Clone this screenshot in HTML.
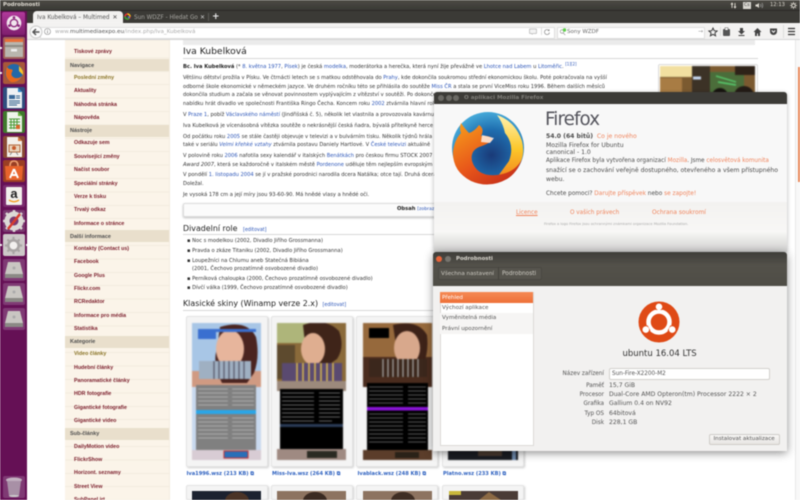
<!DOCTYPE html>
<html><head><meta charset="utf-8"><style>
html,body{margin:0;padding:0;background:#fff;width:800px;height:500px;overflow:hidden}
#r{position:relative;width:800px;height:500px;overflow:hidden;background:#fff;filter:blur(.4px);font-family:"DejaVu Sans",sans-serif}
#r div,#r span.a,#r svg{position:absolute}
.t{white-space:nowrap;line-height:10px;height:10px}
.p{left:183px;font-size:5.15px;color:#333}
.p a,.l{color:#2b55b8}
.s{left:74px;font-family:"Liberation Sans",sans-serif;font-size:5.3px;font-weight:bold;color:#7a1c2a;white-space:nowrap;line-height:10px}
.h{left:65px;width:104px;height:12px;background:#e9dfcc}
.ht{left:70px;font-family:"Liberation Sans",sans-serif;font-size:5.5px;font-weight:bold;color:#4f4f4f;white-space:nowrap;line-height:10px}
.lab{right:196px;font-size:5.7px;color:#555;white-space:nowrap;line-height:10px;text-align:right}
.val{left:609px;font-size:6.1px;color:#555;white-space:nowrap;line-height:10px}
.u{font-size:6.1px;color:#4c4c4c;white-space:nowrap;line-height:10px}
.o{color:#f0845c}
.box{background:#f4f4f4;border:1px solid #e4e4e4;border-radius:2px;box-shadow:1px 1px 2px #ccc;width:80px;height:149px}
.cap{font-size:5.1px;font-weight:bold;color:#2f62c0;white-space:nowrap;line-height:10px;top:469px}
.sk{filter:blur(.5px)}
</style></head><body><div id="r">

<!-- page -->
<div style="left:65px;top:40px;width:104px;height:460px;background:#fbf4e9;border-right:1px solid #f3ecdf"></div>
<div style="left:65px;top:40px;width:104px;height:460px;background:repeating-linear-gradient(180deg,#fbf4e9 0,#fbf4e9 12.4px,#f3ecdf 12.4px,#f3ecdf 13.4px);background-position:0 5px"></div>
<div class="h" style="top:59px"></div><div class="h" style="top:124.5px"></div><div class="h" style="top:230px"></div><div class="h" style="top:336px"></div><div class="h" style="top:427.5px"></div>
<div class="s" style="top:47px">Tiskové zprávy</div>
<div class="ht" style="top:60.5px">Navigace</div>
<div class="s" style="top:72.5px;color:#8a7426">Poslední změny</div>
<div class="s" style="top:86px">Aktuality</div>
<div class="s" style="top:99.5px">Náhodná stránka</div>
<div class="s" style="top:113px">Nápověda</div>
<div class="ht" style="top:126px">Nástroje</div>
<div class="s" style="top:138px">Odkazuje sem</div>
<div class="s" style="top:151.5px">Související změny</div>
<div class="s" style="top:165px">Načíst soubor</div>
<div class="s" style="top:178.5px">Speciální stránky</div>
<div class="s" style="top:191.5px">Verze k tisku</div>
<div class="s" style="top:205px">Trvalý odkaz</div>
<div class="s" style="top:218.5px">Informace o stránce</div>
<div class="ht" style="top:231.5px">Další informace</div>
<div class="s" style="top:244px">Kontakty (Contact us)</div>
<div class="s" style="top:257px">Facebook</div>
<div class="s" style="top:270.5px">Google Plus</div>
<div class="s" style="top:284px">Flickr.com</div>
<div class="s" style="top:297px">RCRedaktor</div>
<div class="s" style="top:310.5px">Informace pro média</div>
<div class="s" style="top:324px">Statistika</div>
<div class="ht" style="top:337px">Kategorie</div>
<div class="s" style="top:349px;color:#8a7426">Video články</div>
<div class="s" style="top:362.5px">Hudební články</div>
<div class="s" style="top:376px">Panoramatické články</div>
<div class="s" style="top:389px">HDR fotografie</div>
<div class="s" style="top:402.5px">Gigantické fotografie</div>
<div class="s" style="top:416px">Gigantické video</div>
<div class="ht" style="top:429px">Sub-články</div>
<div class="s" style="top:441.5px">DailyMotion video</div>
<div class="s" style="top:454.5px">FlickrShow</div>
<div class="s" style="top:468px">Horizont. seznamy</div>
<div class="s" style="top:481.5px">Street View</div>
<div class="s" style="top:494.5px;height:5.5px;overflow:hidden">SubPanel.jrt</div>

<div style="left:183px;top:40px;width:572px;height:5px;background:#ebebeb"></div>
<div class="t" style="left:183px;top:47px;font-size:9.2px;color:#222;line-height:10px">Iva Kubelková</div>
<div style="left:183px;top:58px;width:575px;height:1px;background:#d8d8d8"></div>

<div class="t p" style="top:62px"><b style="color:#222">Bc. Iva Kubelková</b> (* <a>8. května 1977</a>, <a>Písek</a>) je česká <a>modelka</a>, moderátorka a herečka, která nyní žije převážně ve <a>Lhotce nad Labem</a> u <a>Litoměřic</a>. <sup style="font-size:4px;color:#2b55b8;line-height:0">[1][2]</sup></div>
<div class="t p" style="top:73px">Většinu dětství prožila v Písku. Ve čtrnácti letech se s matkou odstěhovala do <a>Prahy</a>, kde dokončila soukromou střední ekonomickou školu. Poté pokračovala na vyšší</div>
<div class="t p" style="top:81.5px">odborné škole ekonomické v německém jazyce. Ve druhém ročníku této se přihlásila do soutěže <a>Miss ČR</a> a stala se první ViceMiss roku 1996. Během dalších měsíců</div>
<div class="t p" style="top:90px">dokončila studium a začala se věnovat povinnostem vyplývajícím z vítězství v soutěži. Po dokončení</div>
<div class="t p" style="top:98.5px">nabídku hrát divadlo ve společnosti Františka Ringo Čecha. Koncem roku <a>2002</a> ztvárnila hlavní roli</div>
<div class="t p" style="top:109.5px">V <a>Praze 1</a>, pobíž <a>Václavského náměstí</a> (Jindřišská č. 5), několik let vlastnila a provozovala kavárnu</div>
<div class="t p" style="top:120.5px">Iva Kubelková je vícenásobná vítězka soutěže o nekrásnější česká ňadra, bývalá přítelkyně herce</div>
<div class="t p" style="top:131.5px">Od počátku roku <a>2005</a> se stále častěji objevuje v televizi a v bulvárním tisku. Několik týdnů hrála</div>
<div class="t p" style="top:140px">také v seriálu <a><i>Velmi křehké vztahy</i></a> ztvárnila postavu Daniely Hartlové. V <a>České televizi</a> aktuálně</div>
<div class="t p" style="top:151px">V polovině roku <a>2006</a> nafotila sexy kalendář v italských <a>Benátkách</a> pro českou firmu STOCK 2007</div>
<div class="t p" style="top:160px"><i>Award 2007</i>, která se každoročně v italském městě <a>Pordenone</a> uděluje těm nejlepším evropským</div>
<div class="t p" style="top:170px">V pondělí <a>1. listopadu 2004</a> se jí v pražské porodnici narodila dcera Natálka; otce tají. Druhá dcera</div>
<div class="t p" style="top:179px">Doležal.</div>
<div class="t p" style="top:190px">Je vysoká 178 cm a její míry jsou 93-60-90. Má hnědé vlasy a hnědé oči.</div>

<div style="left:183px;top:203px;width:572px;height:12px;background:#fbfbfb;border:1px solid #ddd;border-radius:2px;box-shadow:0 1px 2px #bbb"></div>
<div class="t" style="left:397px;top:204px;font-size:5.2px;font-weight:bold;color:#222">Obsah <span style="font-weight:normal;color:#2b55b8;font-size:4.6px">[zobrazit]</span></div>

<div class="t" style="left:183px;top:224px;font-size:7.9px;color:#222">Divadelní role <span class="l" style="font-size:4.8px;margin-left:3px">[editovat]</span></div>
<div style="left:183px;top:234px;width:575px;height:1px;background:#d8d8d8"></div>
<div class="t p" style="left:187px;top:236px">▪ Noc s modelkou (2002, Divadlo Jiřího Grossmanna)</div>
<div class="t p" style="left:187px;top:246px">▪ Pravda o zkáze Titaniku (2002, Divadlo Jiřího Grossmanna)</div>
<div class="t p" style="left:187px;top:255.5px">▪ Loupežníci na Chlumu aneb Statečná Bibiána</div>
<div class="t p" style="left:192px;top:264px">(2001, Čechovo prozatímně osvobozené divadlo)</div>
<div class="t p" style="left:187px;top:274px">▪ Perníková chaloupka (2000, Čechovo prozatímně osvobozené divadlo)</div>
<div class="t p" style="left:187px;top:283px">▪ Dívčí válka (1999, Čechovo prozatímně osvobozené divadlo)</div>
<div class="t" style="left:183px;top:299px;font-size:7.9px;color:#222">Klasické skiny (Winamp verze 2.x) <span class="l" style="font-size:4.8px;margin-left:2px">[editovat]</span></div>
<div style="left:183px;top:310px;width:575px;height:1px;background:#d8d8d8"></div>

<div class="box" style="left:186px;top:316px"></div><div class="box" style="left:271px;top:316px"></div><div class="box" style="left:356px;top:316px"></div><div class="box" style="left:442px;top:316px"></div>
<div class="box" style="left:186px;top:485px;height:13px"></div><div class="box" style="left:271px;top:485px;height:13px"></div><div class="box" style="left:356px;top:485px;height:13px"></div><div class="box" style="left:442px;top:485px;height:13px"></div>

<!-- skin 1 -->
<svg class="sk" style="left:192px;top:323px" width="69" height="137" viewBox="0 0 69 137">
<rect width="69" height="137" fill="#c9d9ee"/><rect width="69" height="62" fill="#a8c6e6"/><rect y="48" width="69" height="16" fill="#d09a82"/>
<path d="M28 4Q55-4 64 14Q68 34 62 50L55 60H30Q20 40 25 26Z" fill="#4a2420"/>
<ellipse cx="38" cy="26" rx="14" ry="19" fill="#e7b59c"/><rect x="8" y="6" width="56" height="3" fill="#3a6fd0"/><rect x="6" y="6" width="18" height="10" fill="#3a6fd0"/>
<rect x="7" y="38" width="52" height="18" fill="#9fb0c2"/><path d="M22 38v18M27 38v18M32 38v18M37 38v18M42 38v18M47 38v18M52 38v18" stroke="#556" stroke-width="1.2"/>
<rect x="4" y="62" width="60" height="65" fill="#808080"/><rect x="4" y="87" width="60" height="4" fill="#2aa6e8"/>
<path d="M6 66h56M6 70h56M6 74h56M6 78h56M6 82h56M6 95h56M6 99h56M6 103h56M6 107h56M6 111h56M6 115h56" stroke="#bbb" stroke-width=".8" stroke-dasharray="30 4"/>
<rect x="0" y="127" width="69" height="10" fill="#d8ccd4"/><rect x="32" y="128" width="24" height="7" fill="#2a6fb8" stroke="#c02c2c"/>
</svg>
<!-- skin 2 -->
<svg class="sk" style="left:277px;top:323px" width="69" height="137" viewBox="0 0 69 137">
<rect width="69" height="66" fill="#8a6a3a"/><rect x="0" y="0" width="32" height="20" fill="#aeb57a"/><rect x="0" y="22" width="18" height="34" fill="#5d4a2e"/>
<path d="M26 2Q48-6 62 8Q68 24 60 36L40 50L30 38Z" fill="#3f2419"/><ellipse cx="36" cy="26" rx="12" ry="16" fill="#dfae90"/>
<rect x="5" y="40" width="60" height="18" fill="#5a4a70"/><path d="M20 40v18M26 40v18M32 40v18M38 40v18M44 40v18M50 40v18M56 40v18" stroke="#e4c34c" stroke-width="1.4"/>
<rect x="0" y="58" width="69" height="10" fill="#9c8a7c"/><rect x="3" y="66" width="63" height="60" fill="#000"/>
<path d="M5 70h58M5 74h58M5 78h58M5 82h58M5 86h58M5 90h58M5 94h58M5 98h50" stroke="#888" stroke-width=".8" stroke-dasharray="32 5"/><rect x="3" y="101" width="63" height="3" fill="#293a55"/>
<rect x="0" y="126" width="69" height="11" fill="#9f8a82"/><rect x="30" y="128" width="30" height="7" fill="#2a2a22"/>
</svg>
<!-- skin 3 -->
<svg class="sk" style="left:363px;top:323px" width="69" height="137" viewBox="0 0 69 137">
<rect width="69" height="62" fill="#96693c"/><rect y="34" width="69" height="30" fill="#4a2c1e"/>
<path d="M30 2Q55-4 64 12Q66 30 60 42L36 42Z" fill="#3d2218"/><ellipse cx="44" cy="25" rx="13" ry="17" fill="#d8a88c"/>
<rect x="6" y="5" width="20" height="10" fill="#000"/>
<rect x="6" y="36" width="58" height="18" fill="#3b271c"/><path d="M20 36v18M25 36v18M30 36v18M35 36v18M40 36v18M45 36v18M50 36v18M55 36v18" stroke="#aaa" stroke-width="1.2"/>
<rect x="4" y="60" width="61" height="67" fill="#000"/><rect x="4" y="84" width="61" height="3.5" fill="#8a14d8"/>
<path d="M6 64h57M6 68h57M6 72h57M6 76h57M6 80h57M6 91h57M6 95h57M6 99h57M6 103h57M6 107h57M6 111h57M6 115h57M6 119h57" stroke="#777" stroke-width=".8" stroke-dasharray="34 5"/>
<rect y="127" width="69" height="10" fill="#5b3d2a"/><rect x="32" y="129" width="24" height="6" fill="#2a2218"/>
</svg>
<!-- skin 4 -->
<svg class="sk" style="left:448px;top:440px" width="70" height="20" viewBox="0 0 70 20"><rect width="70" height="20" fill="#1a1c22"/><rect x="30" y="10" width="24" height="6" fill="#4a3a30"/><rect x="64" y="2" width="4" height="18" fill="#6d88aa"/></svg>
<!-- second row -->
<svg style="left:192px;top:491px" width="69" height="9"><rect width="69" height="9" fill="#1c2230"/><ellipse cx="45" cy="10" rx="12" ry="9" fill="#4a3326"/></svg>
<svg style="left:277px;top:491px" width="69" height="9"><rect width="69" height="9" fill="#8d7360"/><ellipse cx="38" cy="10" rx="12" ry="9" fill="#3a2a22"/></svg>
<svg style="left:363px;top:491px" width="69" height="9"><rect width="69" height="9" fill="#8d7360"/><ellipse cx="40" cy="10" rx="12" ry="9" fill="#3f2e24"/></svg>
<svg style="left:449px;top:491px" width="69" height="9"><rect width="69" height="9" fill="#4a3c36"/><rect width="12" height="4" fill="#c8b83a"/><path d="M30 9L40 1L52 9Z" fill="#8c6a44"/></svg>
<div class="cap" style="left:186.5px">Iva1996.wsz (213 KB) ⧉</div>
<div class="cap" style="left:272px">Miss-Iva.wsz (264 KB) ⧉</div>
<div class="cap" style="left:357.5px">Ivablack.wsz (248 KB) ⧉</div>
<div class="cap" style="left:443px">Platno.wsz (233 KB) ⧉</div>

<!-- infobox photo -->
<div style="left:658px;top:64px;width:98px;height:30px;background:#fff;border:1px solid #ddd;border-radius:2px"></div>
<svg class="sk" style="left:660px;top:66px" width="95" height="28" viewBox="0 0 95 28">
<rect width="95" height="28" fill="#7b5a30"/><rect width="32" height="11" fill="#f2dfa0"/><rect x="0" y="12" width="22" height="16" fill="#a87c44"/>
<rect x="32" y="0" width="18" height="28" fill="#3c3226"/><rect x="50" y="6" width="34" height="22" fill="#4b6d3a"/><rect x="75" y="0" width="20" height="9" fill="#2e2218"/>
<path d="M56 10l20 6M58 16l18 3" stroke="#58d070" stroke-width="1.4"/><path d="M33 12h8" stroke="#c8d8f0" stroke-width="3"/>
<circle cx="60" cy="30" r="8" fill="#181410"/><circle cx="84" cy="30" r="10" fill="#241c16"/>
</svg>
<svg style="left:660px;top:249px" width="95" height="4"><rect width="95" height="4" fill="#57503a"/></svg>

<!-- scrollbar -->
<div style="left:795px;top:40px;width:5px;height:460px;background:#f8f8f8;border-left:1px solid #e8e8e8;box-sizing:border-box"></div>
<div style="left:798px;top:67px;width:2px;height:115px;background:#e98a5c"></div>

<!-- firefox chrome -->
<div style="left:27px;top:10px;width:773px;height:13px;background:#3b3a36"></div>
<div style="left:33px;top:11px;width:90px;height:12px;background:linear-gradient(#f0efed,#f4f3f2);border-radius:4px 4px 0 0"></div>
<div class="t" style="left:37px;top:13px;font-size:5.7px;color:#555;width:72px;overflow:hidden">Iva Kubelková – Multimedia</div>
<div class="t" style="left:112.5px;top:12.5px;font-size:6px;color:#444">✕</div>
<svg style="left:124px;top:13px" width="7" height="7" viewBox="0 0 14 14"><circle cx="7" cy="7" r="5" fill="none" stroke="#e33" stroke-width="3"/><path d="M7 2A5 5 0 0 1 12 7" fill="none" stroke="#f4c20d" stroke-width="3"/><path d="M2 7A5 5 0 0 0 10 11" fill="none" stroke="#3a3" stroke-width="3"/><path d="M7 7h5A5 5 0 0 1 10 11" fill="#4285f4"/></svg>
<div class="t" style="left:134px;top:13px;font-size:5.7px;color:#a8a7a2;width:64px;overflow:hidden">Sun WDZF - Hledat Google</div>
<div class="t" style="left:200px;top:12.5px;font-size:6px;color:#ccc">✕</div>
<div style="left:208px;top:13px;width:1px;height:8px;background:#5c5b56"></div>
<div class="t" style="left:212px;top:12px;font-size:9px;font-weight:bold;color:#eee">+</div>

<div style="left:27px;top:23px;width:773px;height:17px;background:#f3f2f1;border-bottom:1px solid #d5d5d5;box-sizing:border-box"></div>
<div style="left:40px;top:26.5px;width:513px;height:10px;background:#fff;border:1px solid #dedede;border-radius:1px"></div>
<svg style="left:29px;top:25px" width="14" height="14" viewBox="0 0 14 14"><circle cx="7" cy="7" r="6" fill="#fbfbfb" stroke="#c9c9c9"/><path d="M10.5 7H4.5M7 4L4 7l3 3" fill="none" stroke="#555" stroke-width="1.5"/></svg>
<svg style="left:44px;top:28px" width="7" height="7" viewBox="0 0 14 14"><circle cx="7" cy="7" r="6" fill="none" stroke="#888" stroke-width="1.2"/><path d="M7 6v4.500M7 3.500v1.500" stroke="#777" stroke-width="1.4"/></svg>
<div class="t" style="left:55px;top:27px;font-size:5.6px;color:#aaa">www.<span style="color:#555">multimediaexpo.eu</span>/index.php/Iva_Kubelková</div>
<svg style="left:529px;top:28px" width="8" height="7" viewBox="0 0 16 14"><path d="M1 2h14v9H8l-2 2v-2H1z" fill="#f3f3f3" stroke="#999"/></svg>
<div style="left:541px;top:28px;width:1px;height:7px;background:#ddd"></div>
<svg style="left:544px;top:29px" width="6" height="6" viewBox="0 0 12 12"><path d="M10 3A5 5 0 1 0 11 7" fill="none" stroke="#888" stroke-width="1.4"/><path d="M11 0v4H7z" fill="#888"/></svg>
<div style="left:557px;top:26.5px;width:146px;height:10px;background:#fff;border:1px solid #dedede;border-radius:1px"></div>
<svg style="left:558.5px;top:27.5px" width="8" height="8" viewBox="0 0 16 16"><circle cx="6" cy="7" r="3.500" fill="none" stroke="#999" stroke-width="1.4"/><path d="M8.500 10l4 4" stroke="#999" stroke-width="1.4"/><circle cx="11" cy="4" r="3.400" fill="#5fd04a"/></svg>
<div class="t" style="left:567px;top:27px;font-size:5.5px;color:#666">Sony WZDF</div>
<div class="t" style="left:698px;top:27px;font-size:6px;color:#999">→</div>
<svg style="left:708px;top:27px" width="10" height="10" viewBox="0 0 20 20"><path d="M10 2l2.400 5.400 5.800.6-4.400 3.800 1.400 5.800L10 14.600 4.800 17.600l1.400-5.800L1.800 8l5.800-.6z" fill="none" stroke="#333" stroke-width="1.8"/></svg>
<div style="left:720px;top:27px;width:1px;height:9px;background:#ddd"></div>
<svg style="left:722px;top:27px" width="9" height="10" viewBox="0 0 18 20"><rect x="2" y="4" width="14" height="14" rx="2" fill="#555"/><rect x="6" y="1.500" width="6" height="5" fill="#fff" stroke="#555"/></svg>
<svg style="left:737px;top:27px" width="9" height="10" viewBox="0 0 18 20"><path d="M6 2h6v6h4l-7 7-7-7h4z" fill="#444"/><rect x="3" y="16" width="12" height="2" fill="#444"/></svg>
<svg style="left:753px;top:27px" width="9" height="10" viewBox="0 0 18 20"><path d="M9 2L1 10h3v8h4v-5h2v5h4v-8h3z" fill="#444"/></svg>
<svg style="left:769px;top:27px" width="9" height="10" viewBox="0 0 18 20"><path d="M2 3h14v6a7 7 0 0 1-14 0z" fill="#444"/><path d="M5.500 7l3.500 3.500L12.500 7" fill="none" stroke="#fff" stroke-width="2"/></svg>
<div style="left:783px;top:24.500px;width:1px;height:13px;background:#ddd"></div>
<svg style="left:787px;top:27px" width="9" height="9" viewBox="0 0 18 18"><path d="M2 3h14M2 9h14M2 15h14" stroke="#333" stroke-width="2.500"/></svg>

<!-- top panel -->
<div style="left:0;top:0;width:800px;height:10px;background:linear-gradient(#4d4b45,#3a3935)"></div>
<div style="left:0;top:10px;width:800px;height:1px;background:#2b2a27"></div>
<div class="t" style="left:3px;top:0;font-size:5.4px;color:#dfdbd2;font-weight:bold">Podrobnosti</div>
<svg style="left:730px;top:2px" width="7" height="7" viewBox="0 0 14 14"><path d="M4 12V3M2 5l2-3 2 3M10 2v9M8 9l2 3 2-3" fill="none" stroke="#dfdbd2" stroke-width="1.800"/></svg>
<div style="left:743px;top:2px;width:8px;height:7px;background:#d8d6d0"></div>
<div class="t" style="left:744px;top:0.500px;font-size:4.600px;color:#444">Cs</div>
<svg style="left:755px;top:2px" width="9" height="7" viewBox="0 0 18 14"><path d="M1 5h3l4-3v10l-4-3H1z" fill="#dfdbd2"/><path d="M11 4q2 3 0 6M14 2q3 5 0 10" fill="none" stroke="#aaa" stroke-width="1.300"/></svg>
<div class="t" style="left:770px;top:0px;font-size:5.200px;color:#dfdbd2">12:13</div>
<svg style="left:790px;top:1.500px" width="7" height="7" viewBox="0 0 14 14"><circle cx="7" cy="7" r="3.500" fill="none" stroke="#dfdbd2" stroke-width="1.800"/><path d="M7 0v3M7 11v3M0 7h3M11 7h3M2 2l2 2M10 10l2 2M12 2l-2 2M4 10l-2 2" stroke="#dfdbd2" stroke-width="1.500"/></svg>

<!-- launcher -->
<div style="left:0;top:11px;width:27px;height:489px;background:#651055"></div>
<div style="left:2px;top:12px;width:23px;height:23px;background:linear-gradient(#b1399c,#7e1f6e);border-radius:2px"></div>
<svg style="left:6px;top:15px" width="16" height="16" viewBox="0 0 24 24"><circle cx="12" cy="12" r="11" fill="#f2e6ee"/><circle cx="12" cy="12" r="5.500" fill="none" stroke="#8d2a7c" stroke-width="2"/><circle cx="12" cy="3.800" r="2" fill="#8d2a7c"/><circle cx="5" cy="16" r="2" fill="#8d2a7c"/><circle cx="19" cy="16" r="2" fill="#8d2a7c"/></svg>

<svg style="left:2.500px;top:37px" width="22" height="22" viewBox="0 0 22 22"><rect width="22" height="22" rx="2" fill="#a1625a"/><rect x="2" y="2" width="18" height="5" fill="#e86f3a"/><rect x="2" y="5" width="18" height="15" fill="#b9b6ae"/><rect x="2" y="8" width="18" height="2" fill="#8c8a84"/><rect x="8" y="12" width="6" height="2.500" fill="#eee"/></svg>
<svg style="left:2.500px;top:62px" width="22" height="22" viewBox="0 0 22 22"><rect width="22" height="22" rx="2" fill="#a8583a"/><circle cx="11" cy="11" r="9" fill="#2368a8"/><path d="M4 5Q0 15 8 20Q17 21 20 12Q18 17 12 16Q7 14 9 10Q11 7 6 7Z" fill="#e8681c"/><path d="M16 4Q21 8 20 13L16 9Z" fill="#fbc22a"/></svg>
<svg style="left:2.500px;top:86.500px" width="22" height="22" viewBox="0 0 22 22"><rect width="22" height="22" rx="2" fill="#2f4f7f"/><path d="M4 1h11l4 4v16H4z" fill="#eef1f4"/><path d="M15 1l4 4h-4z" fill="#2c86c8"/><rect x="6" y="8" width="6" height="4" fill="#3a6a9a"/><path d="M6 14h11M6 16h11M6 18h8M13 9h4M13 11h4" stroke="#2f5e8a" stroke-width="1"/></svg>
<svg style="left:2.500px;top:111px" width="22" height="22" viewBox="0 0 22 22"><rect width="22" height="22" rx="2" fill="#3f7a2c"/><path d="M4 1h11l4 4v16H4z" fill="#eef4ea"/><path d="M15 1l4 4h-4z" fill="#68b43a"/><path d="M6 8h11M6 11h11M6 14h11M6 17h11M8 8v10M11 8v10M14 8v10" stroke="#4a9a36" stroke-width="1"/><rect x="13" y="14" width="4" height="4" fill="#d8682c"/></svg>
<svg style="left:2.500px;top:135.500px" width="22" height="22" viewBox="0 0 22 22"><rect width="22" height="22" rx="2" fill="#8a4a34"/><path d="M4 1h11l4 4v16H4z" fill="#f4f0ea"/><path d="M15 1l4 4h-4z" fill="#d87a3a"/><rect x="6" y="9" width="11" height="7" fill="#e8d4bc" stroke="#b2663a"/><circle cx="11" cy="12" r="2" fill="#c85c2c"/><path d="M9 16l-2 3M13 16l2 3" stroke="#888"/></svg>
<svg style="left:2.500px;top:160px" width="22" height="22" viewBox="0 0 22 22"><rect width="22" height="22" rx="2" fill="#9a3f24"/><path d="M2 6h18l-1 14H3z" fill="#e8642c"/><path d="M7 6Q7 1 11 1T15 6" fill="none" stroke="#f0a070" stroke-width="1.500"/><path d="M11 9l-4 9M11 9l4 9M8 15h6" stroke="#fff" stroke-width="2"/></svg>
<svg style="left:2.500px;top:185px" width="22" height="22" viewBox="0 0 22 22"><rect width="22" height="22" rx="2" fill="#7a2c6e"/><rect x="3" y="2" width="16" height="18" rx="1" fill="#f2f0ec"/><text x="11" y="13" font-size="13" font-family="Liberation Sans" font-weight="bold" text-anchor="middle" fill="#222">a</text><path d="M6 15q5 3.500 10 0" fill="none" stroke="#f39a1a" stroke-width="1.300"/></svg>
<svg style="left:2.500px;top:209.500px" width="22" height="22" viewBox="0 0 22 22"><rect width="22" height="22" rx="2" fill="#7a3a70"/><circle cx="11" cy="11" r="7" fill="none" stroke="#dcdad6" stroke-width="5"/><path d="M11 0v3M11 19v3M0 11h3M19 11h3M3 3l2 2M17 17l2 2M19 3l-2 2M5 17l-2 2" stroke="#dcdad6" stroke-width="2.500"/><path d="M5 19L17 4" stroke="#d83c2c" stroke-width="2.500"/></svg>
<div style="left:2.500px;top:234px;width:22px;height:22px;background:#cdc8c8;border-radius:2px"></div>
<svg style="left:4px;top:235.500px" width="19" height="19" viewBox="0 0 22 22"><circle cx="11" cy="11" r="6" fill="#f2f0ee" stroke="#a9a5a4" stroke-width="3"/><path d="M11 1v3M11 18v3M1 11h3M18 11h3M4 4l2 2M16 16l2 2M18 4l-2 2M6 16l-2 2" stroke="#a9a5a4" stroke-width="2.500"/></svg>
<div style="left:0;top:243.500px;width:1.500px;height:2px;background:#eee"></div><div style="left:25.500px;top:243.500px;width:1.500px;height:2px;background:#eee"></div>
<div style="left:0;top:47px;width:1.500px;height:2px;background:#eee"></div><div style="left:0;top:72px;width:1.500px;height:2px;background:#eee"></div>

<svg style="left:2.500px;top:258.500px" width="22" height="22" viewBox="0 0 22 22"><rect width="22" height="22" rx="2" fill="#7f3a74"/><path d="M5 3h12l3 12v3H2v-3z" fill="#c9c6c2"/><rect x="2" y="15" width="18" height="4" fill="#8b8985"/><circle cx="11" cy="9" r="1.500" fill="#aaa"/></svg>
<svg style="left:2.500px;top:283px" width="22" height="22" viewBox="0 0 22 22"><rect width="22" height="22" rx="2" fill="#7f3a74"/><path d="M5 3h12l3 12v3H2v-3z" fill="#c9c6c2"/><rect x="2" y="15" width="18" height="4" fill="#8b8985"/><circle cx="11" cy="9" r="1.500" fill="#aaa"/></svg>
<svg style="left:2.500px;top:307.500px" width="22" height="22" viewBox="0 0 22 22"><rect width="22" height="22" rx="2" fill="#7f3a74"/><path d="M5 3h12l3 12v3H2v-3z" fill="#c9c6c2"/><rect x="2" y="15" width="18" height="4" fill="#8b8985"/><circle cx="11" cy="9" r="1.500" fill="#aaa"/></svg>
<svg style="left:2.500px;top:475.500px" width="22" height="22" viewBox="0 0 22 22"><rect width="22" height="22" rx="2" fill="#7f3a74"/><ellipse cx="11" cy="4" rx="8" ry="2.500" fill="#c2b0c0"/><path d="M4 5l2 15h10l2-15z" fill="#a890a6"/><ellipse cx="11" cy="20" rx="5" ry="1" fill="#ccc"/></svg>

<!-- About Firefox window -->
<div style="left:434px;top:92px;width:353px;height:160px;background:#f8f8f8;border-radius:3px 3px 0 0;box-shadow:0 1px 4px rgba(0,0,0,.3)"></div>
<div style="left:434px;top:202px;width:353px;height:50px;background:linear-gradient(#f3f2f0,#f8f7f6 60%,#cfcfce)"></div>
<div style="left:434px;top:92px;width:353px;height:11.500px;background:#3c3b37;border-radius:3px 3px 0 0"></div>
<div style="left:438px;top:95px;width:6px;height:6px;border-radius:50%;background:#6a6964"></div>
<div style="left:445.500px;top:95px;width:6px;height:6px;border-radius:50%;background:#6a6964"></div>
<div style="left:453px;top:95px;width:6px;height:6px;border-radius:50%;background:#6a6964"></div>
<div class="t" style="left:464px;top:93px;font-size:5.600px;font-weight:bold;color:#7f7e79">O aplikaci Mozilla Firefox</div>
<svg style="left:449px;top:111px" width="76" height="76" viewBox="0 0 76 76">
<defs><radialGradient id="b" cx=".55" cy=".6" r=".6"><stop offset="0" stop-color="#1a3a78"/><stop offset=".6" stop-color="#1f6fb0"/><stop offset="1" stop-color="#45a8d8"/></radialGradient>
<linearGradient id="f" x1="0" y1="0" x2=".7" y2="1"><stop offset="0" stop-color="#f7a01d"/><stop offset=".6" stop-color="#e8561a"/><stop offset="1" stop-color="#c8321a"/></linearGradient>
<linearGradient id="y" x1="0" y1="0" x2="0" y2="1"><stop offset="0" stop-color="#fff2b0"/><stop offset=".5" stop-color="#fcc72a"/><stop offset="1" stop-color="#f07a1c"/></linearGradient></defs>
<circle cx="39" cy="37" r="36" fill="url(#b)"/>
<path d="M48 4Q66 10 73 30Q78 50 62 64Q50 72 44 72L60 50Q66 34 56 22Q54 12 48 4Z" fill="url(#y)"/>
<path d="M12 12Q10 18 12 22Q6 28 4 40Q3 60 22 70Q40 78 58 68Q68 62 73 48Q66 62 48 64Q28 66 23 50Q21 40 30 36Q42 32 44 28Q40 24 32 25Q36 18 30 14Q26 20 20 22Q16 18 12 12Z" fill="url(#f)"/>
<path d="M33 24l12 3-4 5-9-1z" fill="#fff" opacity=".75"/>
</svg>
<div class="t" style="left:545px;top:107px;height:26px;line-height:26px;font-size:18.300px;color:#54545c;letter-spacing:-.9px">Firefox</div>
<div class="u" style="left:546px;top:132px;font-size:6.100px"><b>54.0 (64 bitů)</b> &nbsp;<span class="o">Co je nového</span></div>
<div class="u" style="left:546px;top:141px">Mozilla Firefox for Ubuntu</div>
<div class="u" style="left:546px;top:148px">canonical - 1.0</div>
<div class="u" style="left:546px;top:156px;font-size:5.700px">Aplikace Firefox byla vytvořena organizací <span class="o">Mozilla</span>. Jsme <span class="o">celosvětová komunita</span></div>
<div class="u" style="left:546px;top:166px">snažící se o zachování veřejně dostupného, otevřeného a všem přístupného</div>
<div class="u" style="left:546px;top:175px">webu.</div>
<div class="u" style="left:546px;top:189px;font-size:5.800px">Chcete pomoci? <span class="o">Darujte příspěvek</span> nebo <span class="o">se zapojte!</span></div>
<div class="u o" style="left:516px;top:208px;font-size:5.700px;text-decoration:underline">Licence</div>
<div class="u o" style="left:570px;top:208px;font-size:5.700px">O vašich právech</div>
<div class="u o" style="left:652px;top:208px;font-size:5.900px">Ochrana soukromí</div>
<div class="u" style="left:544px;top:219px;font-size:3.600px;color:#aaa">Firefox a logo Firefox jsou ochrannými známkami organizace Mozilla Foundation.</div>

<!-- Details window -->
<div style="left:433px;top:252px;width:354px;height:199px;background:#f2f1f0;border-radius:3px 3px 0 0;box-shadow:0 2px 9px rgba(0,0,0,.45)"></div>
<div style="left:433px;top:252px;width:354px;height:34px;background:linear-gradient(#3e3d39,#53514a 40%,#4f4d46);border-radius:3px 3px 0 0"></div>
<div style="left:436px;top:256px;width:6px;height:6px;border-radius:50%;background:#e8643a"></div>
<div style="left:444.500px;top:256px;width:6px;height:6px;border-radius:50%;background:#77756f"></div>
<div class="t" style="left:456px;top:253.500px;font-size:5.400px;font-weight:bold;color:#d8d5cd">Podrobnosti</div>
<div style="left:438px;top:267px;width:104px;height:13px;background:#57554e;border:1px solid #4a4842;border-radius:2px;box-sizing:border-box"></div>
<div style="left:498px;top:267px;width:1px;height:13px;background:#45433d"></div>
<div class="t" style="left:441px;top:269px;font-size:5.600px;color:#cfccc4">Všechna nastavení</div>
<div class="t" style="left:502px;top:269px;font-size:5.800px;color:#cfccc4">Podrobnosti</div>
<div style="left:439.500px;top:292px;width:94px;height:154px;background:#fff;border:1px solid #dcdad7;box-sizing:border-box"></div>
<div style="left:440px;top:292px;width:93px;height:10.500px;background:linear-gradient(#f58a55,#ee7038)"></div>
<div style="left:440px;top:313px;width:93px;height:10.500px;background:#f6f5f4"></div>
<div style="left:440px;top:323.500px;width:93px;height:10.500px;background:#f6f5f4"></div>
<div class="t" style="left:442px;top:292.500px;font-size:5.600px;color:#fff">Přehled</div>
<div class="t" style="left:442px;top:303px;font-size:5.600px;color:#555">Výchozí aplikace</div>
<div class="t" style="left:442px;top:313px;font-size:5.600px;color:#555">Vyměnitelná média</div>
<div class="t" style="left:442px;top:323.500px;font-size:5.600px;color:#555">Právní upozornění</div>
<svg style="left:638px;top:301px" width="42" height="42" viewBox="0 0 42 42"><circle cx="21" cy="21" r="20.500" fill="#df4a16"/><circle cx="21" cy="21" r="10.500" fill="none" stroke="#fff" stroke-width="4.500"/><path d="M21 3L21 9M5.500 30L11 27M36.500 30L31 27" stroke="#df4a16" stroke-width="6"/><circle cx="21" cy="5.800" r="3.300" fill="#fff"/><circle cx="7.800" cy="28.600" r="3.300" fill="#fff"/><circle cx="34.200" cy="28.600" r="3.300" fill="#fff"/></svg>
<div class="t" style="left:622.500px;top:349px;font-size:8.500px;color:#333">ubuntu 16.04 LTS</div>
<div class="lab" style="top:369px">Název zařízení</div>
<div style="left:609px;top:368px;width:161px;height:12px;background:#fff;border:1px solid #d3d1cd;border-radius:2px;box-sizing:border-box"></div>
<div class="val" style="left:612px;top:369px;font-size:5.700px">Sun-Fire-X2200-M2</div>
<div class="lab" style="top:380.500px">Paměť</div><div class="val" style="top:380.500px">15,7 GiB</div>
<div class="lab" style="top:390px">Procesor</div><div class="val" style="top:390px">Dual-Core AMD Opteron(tm) Processor 2222 × 2</div>
<div class="lab" style="top:399px">Grafika</div><div class="val" style="top:399px">Gallium 0.4 on NV92</div>
<div class="lab" style="top:408.500px">Typ OS</div><div class="val" style="top:408.500px">64bitová</div>
<div class="lab" style="top:417.500px">Disk</div><div class="val" style="top:417.500px">228,1 GB</div>
<div style="left:709px;top:433.500px;width:71px;height:11.500px;background:linear-gradient(#f8f7f6,#e8e6e3);border:1px solid #cfccc8;border-radius:2px;box-sizing:border-box"></div>
<div class="t" style="left:713.500px;top:434px;font-size:5.600px;color:#555">Instalovat aktualizace</div>

</div></body></html>
